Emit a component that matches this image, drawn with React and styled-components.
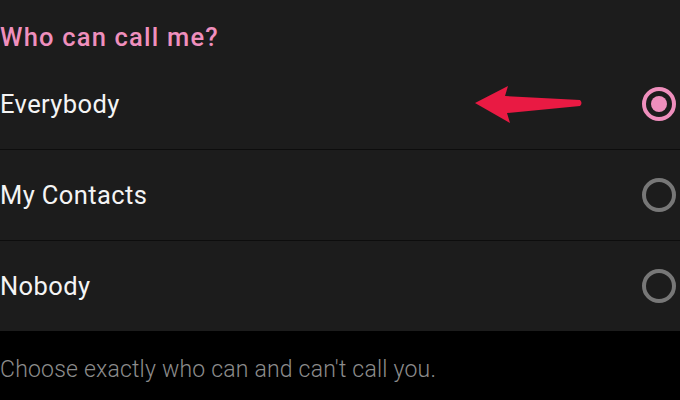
import React, { useState } from "react";
import styled, { createGlobalStyle } from "styled-components";

const GlobalStyle = createGlobalStyle`
  html, body {
    margin: 0;
    padding: 0;
    background: #000;
  }
  body {
    font-family: Roboto, "Liberation Sans", sans-serif;
    -webkit-font-smoothing: antialiased;
  }
`;

const Page = styled.div`
  width: 680px;
  height: 400px;
  overflow: hidden;
  background: #000;
`;

const Panel = styled.section`
  background: #1c1c1c;
`;

const Title = styled.h2`
  margin: 0;
  height: 58px;
  padding-top: 22px;
  box-sizing: border-box;
  font-size: 25.5px;
  font-weight: 500;
  letter-spacing: 1.2px;
  color: #ef8fbd;
  line-height: 30px;
`;

const Row = styled.div`
  position: relative;
  display: flex;
  align-items: center;
  justify-content: space-between;
  height: 91px;
  box-sizing: border-box;
  border-top: ${(props) => (props.first ? "none" : "1px solid #0d0d0d")};
  cursor: pointer;
`;

const Label = styled.span`
  font-size: 25.5px;
  color: #f4f4f4;
  letter-spacing: 0.4px;
`;

const Radio = styled.span`
  width: 34px;
  height: 34px;
  margin-right: 4px;
  box-sizing: border-box;
  border-radius: 50%;
  border: 4px solid ${(props) => (props.checked ? "#ef8fbd" : "#777")};
  display: flex;
  align-items: center;
  justify-content: center;

  &::after {
    content: "";
    display: ${(props) => (props.checked ? "block" : "none")};
    width: 16px;
    height: 16px;
    border-radius: 50%;
    background: #ef8fbd;
  }
`;

const Arrow = styled.svg`
  position: absolute;
  left: 470px;
  top: 50%;
  margin-top: -22px;
`;

const Footer = styled.p`
  margin: 0;
  padding-top: 25px;
  font-size: 23px;
  font-weight: 300;
  letter-spacing: 0.2px;
  color: #8c8c8c;
`;

const options = ["Everybody", "My Contacts", "Nobody"];

export default function App() {
  const [choice, setChoice] = useState("Everybody");

  return (
    <>
      <GlobalStyle />
      <Page>
        <Panel>
          <Title>Who can call me?</Title>
          {options.map((item, i) => (
            <Row key={item} first={i === 0} onClick={() => setChoice(item)}>
              <Label>{item}</Label>
              {i === 0 && (
                <Arrow width="120" height="44" viewBox="0 0 120 44">
                  <path
                    d="M5 21 L38 4 L35 14 L110 18 Q113 21 110 24 L37 31 L40 41 Z"
                    fill="#e91a43"
                  />
                </Arrow>
              )}
              <Radio checked={choice === item} />
            </Row>
          ))}
        </Panel>
        <Footer>Choose exactly who can and can't call you.</Footer>
      </Page>
    </>
  );
}
